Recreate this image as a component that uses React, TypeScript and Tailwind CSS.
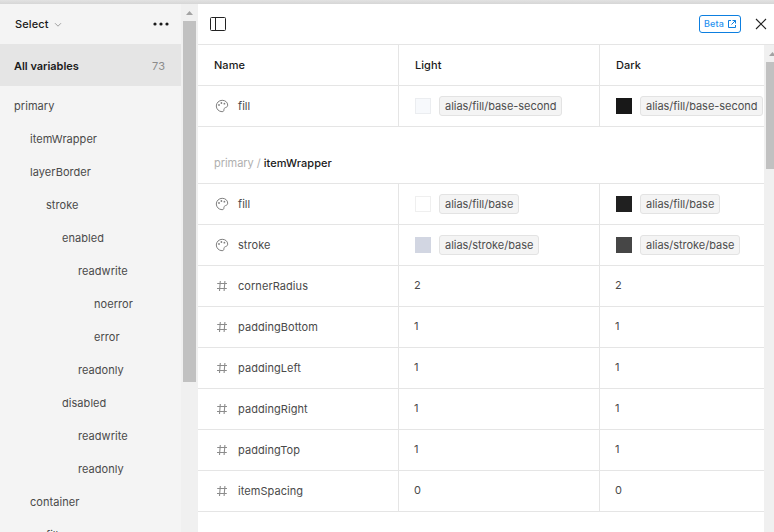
import React from "react";

const tree: { label: string; indent: string }[] = [
  { label: "primary", indent: "pl-[14px]" },
  { label: "itemWrapper", indent: "pl-[30px]" },
  { label: "layerBorder", indent: "pl-[30px]" },
  { label: "stroke", indent: "pl-[46px]" },
  { label: "enabled", indent: "pl-[62px]" },
  { label: "readwrite", indent: "pl-[78px]" },
  { label: "noerror", indent: "pl-[94px]" },
  { label: "error", indent: "pl-[94px]" },
  { label: "readonly", indent: "pl-[78px]" },
  { label: "disabled", indent: "pl-[62px]" },
  { label: "readwrite", indent: "pl-[78px]" },
  { label: "readonly", indent: "pl-[78px]" },
  { label: "container", indent: "pl-[30px]" },
  { label: "fill", indent: "pl-[46px]" },
];

const numbers: [string, string][] = [
  ["cornerRadius", "2"],
  ["paddingBottom", "1"],
  ["paddingLeft", "1"],
  ["paddingRight", "1"],
  ["paddingTop", "1"],
  ["itemSpacing", "0"],
];

function Palette() {
  return (
    <svg width="14" height="14" viewBox="0 0 14 14" fill="none" stroke="#808080" strokeWidth="1">
      <path d="M7.2 1.3C4 1.3 1.3 3.8 1.3 7c0 3 2.5 5.6 5.7 5.7 1.5 0 1.9-.8 1.9-1.8 0-1.3.4-1.9 1.8-2.4 1.2-.4 2-1 2-2.4 0-2.8-2.4-4.8-5.5-4.8Z" />
      <g fill="#808080" stroke="none">
        <circle cx="4" cy="6" r=".9" />
        <circle cx="6.4" cy="4" r=".9" />
        <circle cx="9.4" cy="4.7" r=".9" />
      </g>
    </svg>
  );
}

function Hash() {
  return (
    <svg width="14" height="14" viewBox="0 0 14 14" fill="none" stroke="#8c8c8c" strokeWidth="1.1">
      <path d="M5.3 2 4.5 12M9.9 2l-.8 10M2.2 4.5h9.8M2 9.5h9.8" />
    </svg>
  );
}

function Row({ children }: { children: React.ReactNode }) {
  return (
    <div className="grid h-[41px] shrink-0 grid-cols-[201px_201px_164px] border-b border-[#e5e5e5]">
      {children}
    </div>
  );
}

function NameCell({ icon, label }: { icon: React.ReactNode; label: string }) {
  return (
    <div className="flex items-center gap-[9px] border-r border-[#e5e5e5] pl-[17px]">
      {icon}
      <span>{label}</span>
    </div>
  );
}

function AliasCell({ swatch, label, last }: { swatch: string; label: string; last?: boolean }) {
  return (
    <div className={`flex items-center gap-2 border-[#e5e5e5] pl-4 ${last ? "" : "border-r"}`}>
      <span className={`size-4 shrink-0 ${swatch}`} />
      <span className="flex h-5 items-center whitespace-nowrap rounded-[3px] border border-[#e3e3e3] bg-[#f4f4f4] px-[5px] tracking-[-0.03px] text-[#4d4d4d]">
        {label}
      </span>
    </div>
  );
}

function NumberRow({ name, value }: { name: string; value: string }) {
  return (
    <Row>
      <NameCell icon={<Hash />} label={name} />
      <div className="flex items-center border-r border-[#e5e5e5] pb-0.5 pl-[15px]">{value}</div>
      <div className="flex items-center pb-0.5 pl-[15px]">{value}</div>
    </Row>
  );
}

export default function App() {
  return (
    <div className="flex h-[532px] w-[774px] flex-col overflow-hidden bg-white font-['Inter',sans-serif] text-[11px] leading-4 tracking-[0.055px] text-[#4a4a4a]">
      <div className="h-1 shrink-0 bg-linear-to-b from-[#e2e2e2] to-[#d6d6d6]" />
      <div className="flex min-h-0 flex-1">
        <aside className="flex w-[181px] shrink-0 flex-col overflow-hidden bg-[#f4f4f4]">
          <div className="flex h-10 shrink-0 items-center pl-[15px] pr-3 font-medium text-[#1a1a1a]">
            <span className="tracking-[0.12px]">Select</span>
            <svg className="ml-[5px] mt-px" width="8" height="8" viewBox="0 0 8 8" fill="none" stroke="#a0a0a0">
              <path d="m1 2.2 3 3 3-3" />
            </svg>
            <svg className="ml-auto" width="16" height="4" viewBox="0 0 16 4" fill="#1a1a1a">
              <circle cx="2" cy="2" r="1.6" />
              <circle cx="8" cy="2" r="1.6" />
              <circle cx="14" cy="2" r="1.6" />
            </svg>
          </div>
          <div className="flex h-[42px] shrink-0 items-center justify-between bg-[#e5e5e5] pl-[14px] pr-4 pt-0.5">
            <span className="font-semibold tracking-[-0.03px] text-[#1a1a1a]">All variables</span>
            <span className="text-[#8c8c8c]">73</span>
          </div>
          <ul className="pt-[3px]">
            {tree.map((t, i) => (
              <li key={i} className={`flex h-[33px] items-center ${t.indent}`}>
                {t.label}
              </li>
            ))}
          </ul>
        </aside>
        <div className="flex w-[17px] shrink-0 flex-col items-center bg-[#f0f0f0]">
          <div className="flex h-[17px] items-center">
            <svg width="7" height="4" viewBox="0 0 7 4" fill="#a3a3a3">
              <path d="M0 4 3.5 0 7 4Z" />
            </svg>
          </div>
          <div className="h-[361px] w-[13px] bg-[#c1c1c1]" />
        </div>
        <main className="flex w-[576px] shrink-0 flex-col">
          <header className="flex h-[41px] shrink-0 items-center border-b border-[#e5e5e5] pl-3">
            <svg width="16" height="14" viewBox="0 0 16 14" fill="none" stroke="#222">
              <rect x=".5" y=".5" width="15" height="13" rx="1" />
              <path d="M5.5.5v13" />
            </svg>
            <div className="ml-auto flex h-[18px] w-[42px] items-center gap-[4px] rounded-[3px] border border-[#0d7fe0] pl-[4px] text-[9px] font-medium tracking-[0.12px] text-[#2a93f0]">
              <span>Beta</span>
              <svg width="8" height="8" viewBox="0 0 8 8" fill="none" stroke="#0d7fe0">
                <path d="M3 .5H.5v7h7V5M4.5.5h3v3M7.5.5l-4 4" />
              </svg>
            </div>
            <svg className="ml-[14px] mr-[7px]" width="12" height="12" viewBox="0 0 12 12" fill="none" stroke="#222" strokeWidth="1.1">
              <path d="m1 1 10 10M11 1 1 11" />
            </svg>
          </header>
          <div className="flex min-h-0 flex-1">
            <div className="flex w-[566px] shrink-0 flex-col">
              <Row>
                <div className="flex items-center border-r border-[#e5e5e5] pl-4 font-medium text-[#1a1a1a]">Name</div>
                <div className="flex items-center border-r border-[#e5e5e5] pl-4 font-medium text-[#1a1a1a]">Light</div>
                <div className="flex items-center pl-4 font-medium text-[#1a1a1a]">Dark</div>
              </Row>
              <Row>
                <NameCell icon={<Palette />} label="fill" />
                <AliasCell swatch="bg-[#f7f9fc] border border-[#ebedf0]" label="alias/fill/base-second" />
                <AliasCell swatch="bg-[#181818]" label="alias/fill/base-second" last />
              </Row>
              <div className="flex h-[57px] shrink-0 items-end border-b border-[#e5e5e5] pb-3 pl-4">
                <span className="whitespace-pre tracking-[-0.04px] text-[#b0b0b0]">primary / </span>
                <span className="font-medium text-[#1a1a1a]">itemWrapper</span>
              </div>
              <Row>
                <NameCell icon={<Palette />} label="fill" />
                <AliasCell swatch="bg-white border border-[#efefef]" label="alias/fill/base" />
                <AliasCell swatch="bg-[#202020]" label="alias/fill/base" last />
              </Row>
              <Row>
                <NameCell icon={<Palette />} label="stroke" />
                <AliasCell swatch="bg-[#d2d6e2]" label="alias/stroke/base" />
                <AliasCell swatch="bg-[#464646]" label="alias/stroke/base" last />
              </Row>
              {numbers.map(([name, value]) => (
                <NumberRow key={name} name={name} value={value} />
              ))}
            </div>
            <div className="w-[10px] shrink-0 overflow-hidden bg-[#f0f0f0] pl-0.5">
              <div className="flex h-[17px] items-center pl-[3px]">
                <svg className="shrink-0" width="7" height="4" viewBox="0 0 7 4" fill="#a3a3a3">
                  <path d="M0 4 3.5 0 7 4Z" />
                </svg>
              </div>
              <div className="h-[107px] bg-[#c1c1c1]" />
            </div>
          </div>
        </main>
      </div>
    </div>
  );
}
